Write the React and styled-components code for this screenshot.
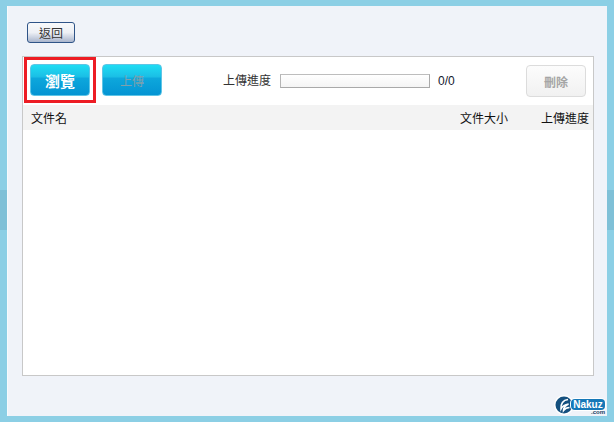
import React from "react";
import styled, { createGlobalStyle } from "styled-components";

const GlobalStyle = createGlobalStyle`
  html, body {
    margin: 0;
    padding: 0;
  }
  body {
    font-family: "Noto Sans CJK TC", "Liberation Sans", sans-serif;
    font-size: 12px;
    background: #8ccfe5;
  }
`;

const Page = styled.div`
  box-sizing: border-box;
  width: 614px;
  height: 422px;
  padding: 6px 7px;
  background: linear-gradient(
    #8ccfe5 190px,
    #7fc0d7 190px,
    #7fc0d7 230px,
    #8ccfe5 230px
  );
  overflow: hidden;
`;

const Panel = styled.div`
  position: relative;
  box-sizing: border-box;
  height: 410px;
  padding: 16px 13px 0 15px;
  background: #f0f3f9;
  box-shadow: inset 1px 0 0 #f7fbfd;
`;

const BackButton = styled.button`
  display: block;
  box-sizing: border-box;
  width: 48px;
  height: 21px;
  margin: 0 0 0 5px;
  padding: 0;
  font-family: inherit;
  font-size: 12px;
  line-height: 17px;
  color: #333;
  background: linear-gradient(#f8f9fb 0%, #eef0f5 50%, #a9b5cd 100%);
  border: 1px solid #2f5488;
  border-radius: 3px;
`;

const Box = styled.div`
  box-sizing: border-box;
  width: 572px;
  height: 320px;
  margin-top: 13px;
  background: #fff;
  border: 1px solid #c8c8c8;
`;

const Toolbar = styled.div`
  display: flex;
  align-items: center;
  height: 48px;
  padding: 0 7px 0 1px;
`;

const Highlight = styled.div`
  display: flex;
  align-items: center;
  justify-content: center;
  box-sizing: border-box;
  width: 72px;
  height: 46px;
  margin-bottom: 2px;
  border: 3px solid #ed1c24;
`;

const BlueButton = styled.button`
  display: block;
  box-sizing: border-box;
  width: 60px;
  height: 32px;
  margin: 0 0 ${(props) => props.$lift}px;
  padding: 0;
  font-family: inherit;
  font-size: ${(props) => (props.disabled ? 12 : 15)}px;
  font-weight: ${(props) => (props.disabled ? 400 : 700)};
  color: ${(props) => (props.disabled ? "#7fa0ad" : "#fff")};
  background: linear-gradient(#1fdcf3 0%, #1bc0e6 38%, #0da7dc 45%, #0494d3 100%);
  border: 1px solid #5ec5e6;
  border-radius: 4px;
`;

const UploadSlot = styled.div`
  margin-left: 6px;
`;

const ProgressLabel = styled.span`
  margin-left: 61px;
  color: #333;
  line-height: 16px;
  margin-bottom: 2px;
`;

const ProgressTrack = styled.div`
  box-sizing: border-box;
  width: 150px;
  height: 14px;
  margin: 0 0 0 9px;
  background: linear-gradient(#fff, #f4f4f4);
  border: 1px solid #a9a9a9;
  border-top-color: #bdbdbd;
  border-left-color: #b5b5b5;
`;

const ProgressCount = styled.span`
  margin-left: 8px;
  font-family: "Liberation Sans", sans-serif;
  font-size: 12px;
  color: #14202e;
`;

const DeleteButton = styled.button`
  box-sizing: border-box;
  width: 60px;
  height: 32px;
  margin: 0 0 0 auto;
  padding: 0;
  font-family: inherit;
  font-size: 12px;
  font-weight: 700;
  color: #a5a5a5;
  background: linear-gradient(#fcfcfc, #f1f1f1);
  border: 1px solid #dcdcdc;
  border-radius: 4px;
`;

const TableHead = styled.div`
  display: grid;
  grid-template-columns: 1fr 48px 48px;
  column-gap: 33px;
  align-items: center;
  height: 25px;
  padding: 0 4px 0 8px;
  background: #f3f3f3;
  color: #111;
  line-height: 25px;
`;

const Badge = styled.div`
  position: absolute;
  right: 1px;
  bottom: 1px;
  width: 52px;
  height: 20px;
`;

const BadgeIcon = styled.svg`
  position: absolute;
  left: 0;
  top: 0;
`;

const BadgeName = styled.span`
  position: absolute;
  left: 17px;
  top: 4px;
  width: 34px;
  height: 11px;
  background: #1678b8;
  border-radius: 4px;
  box-shadow: 0 0 0 1px #fff;
  font-family: "Liberation Sans", sans-serif;
  font-size: 10px;
  font-weight: 700;
  line-height: 11px;
  text-align: center;
  color: #fff;
`;

const BadgeDomain = styled.span`
  position: absolute;
  right: 1px;
  bottom: 0;
  font-family: "Liberation Sans", sans-serif;
  font-size: 6px;
  font-weight: 700;
  line-height: 6px;
  color: #1b3f63;
`;

const App = () => (
  <>
    <GlobalStyle />
    <Page>
      <Panel>
        <BackButton>返回</BackButton>
        <Box>
          <Toolbar>
            <Highlight>
              <BlueButton $lift={0}>瀏覽</BlueButton>
            </Highlight>
            <UploadSlot>
              <BlueButton disabled $lift={2}>上傳</BlueButton>
            </UploadSlot>
            <ProgressLabel>上傳進度</ProgressLabel>
            <ProgressTrack />
            <ProgressCount>0/0</ProgressCount>
            <DeleteButton disabled>刪除</DeleteButton>
          </Toolbar>
          <TableHead>
            <span>文件名</span>
            <span>文件大小</span>
            <span>上傳進度</span>
          </TableHead>
        </Box>
        <Badge>
          <BadgeIcon width="20" height="20" viewBox="0 0 20 20">
            <circle cx="10" cy="10" r="10" fill="#fff" />
            <circle cx="10" cy="10" r="8.5" fill="#15507f" />
            <path d="M14 4.5 C9 5 6.5 9 7 14 C8.5 11 11 9.5 14.5 9 C11.5 10.5 9.5 12.5 9.5 15.5 C11 13.5 13 12.5 15.5 12.5" fill="none" stroke="#fff" strokeWidth="1.6" />
          </BadgeIcon>
          <BadgeName>Nakuz</BadgeName>
          <BadgeDomain>.com</BadgeDomain>
        </Badge>
      </Panel>
    </Page>
  </>
);

export default App;
